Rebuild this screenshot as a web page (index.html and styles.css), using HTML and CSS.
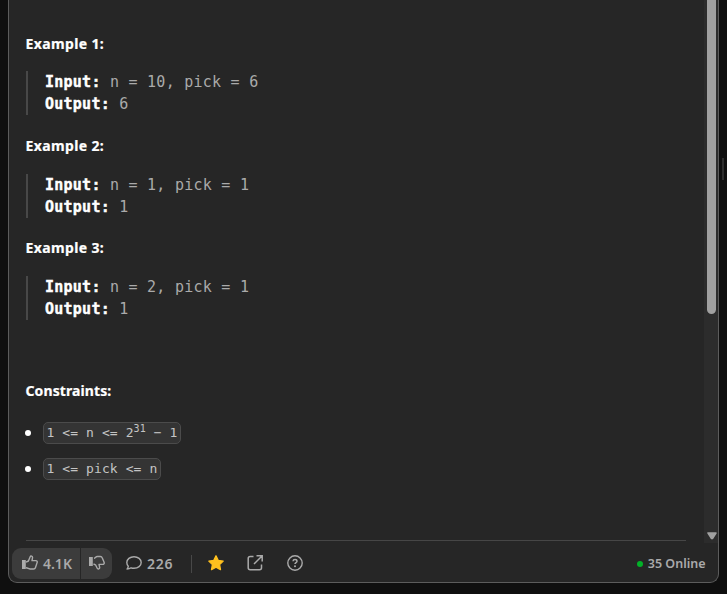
FILE: index.html
```html
<!DOCTYPE html>
<html lang="en">
<head>
<meta charset="utf-8">
<title>Guess Number Higher or Lower</title>
<link rel="stylesheet" href="styles.css">
</head>
<body>
<div class="panel">
  <div class="scroll-area">
    <main class="description">
      <h2 class="heading"><span>Example 1:</span></h2>
      <pre class="example"><b>Input:</b> n = 10, pick = 6
<b>Output:</b> 6</pre>
      <h2 class="heading"><span>Example 2:</span></h2>
      <pre class="example"><b>Input:</b> n = 1, pick = 1
<b>Output:</b> 1</pre>
      <h2 class="heading"><span>Example 3:</span></h2>
      <pre class="example"><b>Input:</b> n = 2, pick = 1
<b>Output:</b> 1</pre>
      <h2 class="heading constraints-title"><span>Constraints:</span></h2>
      <ul class="constraints">
        <li><code>1 &lt;= n &lt;= 2<sup>31</sup> − 1</code></li>
        <li><code>1 &lt;= pick &lt;= n</code></li>
      </ul>
      <div class="rule"></div>
    </main>
    <div class="scrollbar">
      <div class="thumb"></div>
      <svg class="arrow" width="10" height="8" viewBox="0 0 10 8"><path d="M1 1h8L5.500 6.500h-1z" fill="#a0a0a0" stroke="#a0a0a0" stroke-width="1.500" stroke-linejoin="round"/></svg>
    </div>
  </div>
  <footer class="footer">
    <div class="votes">
      <button class="vote up">
        <svg width="16" height="16" viewBox="0 0 16 16"><path d="M0 5h3.800v9H0z" fill="currentColor"/><path d="M4 7.200 6.400 6 8.200 1.700c.5-1.100 2.600-.6 2.300 1.200L10 5.600h3.700c1.200 0 1.800.9 1.400 2l-1.700 5.200c-.3.900-.8 1.200-1.700 1.200H8.200c-1.700 0-2.200-1.200-4.200-1.200" fill="none" stroke="currentColor" stroke-width="1.400" stroke-linejoin="round"/></svg>
        <span>4.1K</span>
      </button>
      <button class="vote down">
        <svg width="16" height="16" viewBox="0 0 16 16"><path d="M0 2h3.800v9H0z" fill="currentColor"/><path d="M5 3.200C6.500 3 6.500 1.500 8.400 1.500h3c.9 0 1.500.5 1.800 1.300l1.900 4.500c.4 1.200-.3 2.100-1.500 2.100H10l.6 2.700c.4 1.800-1.700 2.600-2.400 1.200L6.500 9.800 4.500 9" fill="none" stroke="currentColor" stroke-width="1.400" stroke-linejoin="round"/></svg>
      </button>
    </div>
    <div class="comments">
      <svg width="16" height="16" viewBox="0 0 16 16"><path d="M8 1.700c4 0 7.200 2.500 7.200 5.800S12 13.300 8 13.300c-1 0-2-.2-2.900-.5-1.200.9-2.500 1.300-4.100 1.300.8-.9 1.200-1.900 1.300-2.900C1.300 10.200.8 8.900.8 7.500.8 4.200 4 1.700 8 1.700z" fill="none" stroke="currentColor" stroke-width="1.400" stroke-linejoin="round"/></svg>
      <span>226</span>
    </div>
    <div class="divider"></div>
    <svg class="star" width="18" height="18" viewBox="0 0 18 18"><path d="m9 1.800 2.200 4.600 5 .7-3.600 3.500.9 5L9 13.200l-4.500 2.400.9-5L1.800 7.100l5-.7z" fill="#ffc01e" stroke="#ffc01e" stroke-width="1.300" stroke-linejoin="round"/></svg>
    <svg class="share" width="18" height="18" viewBox="0 0 18 18"><path d="M7.500 2.500H4.200c-1.200 0-2 .8-2 2v9.300c0 1.200.8 2 2 2h9.300c1.200 0 2-.8 2-2V10.500M10.500 1.800h5.700v5.700M16 2l-8 8" fill="none" stroke="currentColor" stroke-width="1.500"/></svg>
    <svg class="help" width="18" height="18" viewBox="0 0 18 18"><circle cx="9" cy="9" r="7.200" fill="none" stroke="currentColor" stroke-width="1.400"/><path d="M7 7.300c.1-1.100.9-1.800 2-1.800s2 .7 2 1.700c0 1.500-2 1.400-2 2.900" fill="none" stroke="currentColor" stroke-width="1.500"/><circle cx="9" cy="12.200" r="1" fill="currentColor"/></svg>
    <div class="online"><i class="dot"></i><span>35 Online</span></div>
  </footer>
</div>
<div class="resizer"></div>
</body>
</html>
```
FILE: styles.css
```css
* { box-sizing: border-box; }

body {
  margin: 0;
  height: 594px;
  padding-left: 8px;
  display: flex;
  overflow: hidden;
  background: #0f0f0f;
  color: #fff;
  font-family: "Noto Sans", sans-serif;
}

.panel {
  width: 711px;
  height: 583px;
  display: flex;
  flex-direction: column;
  border: 1px solid #5c5c5c;
  border-top: 0;
  border-radius: 0 0 9px 9px;
  background: #262626;
  overflow: hidden;
}

.scroll-area { display: flex; height: 543px; }

.description { flex: 1; padding: 32px 18px 0 17px; }

.heading {
  margin: 0 0 0 -0.5px;
  height: 24px;
  font-size: 14px;
  line-height: 24px;
  font-weight: 700;
  letter-spacing: 0.37px;
  -webkit-text-stroke: 0.2px #fff;
}

.example {
  margin: 15.45px 0 18.75px;
  height: 44px;
  padding-left: 17px;
  border-left: 2px solid #484848;
  color: #aaa;
  font: 15px/22px "DejaVu Sans Mono", monospace;
  letter-spacing: 0.25px;
}

.example b { color: #fff; -webkit-text-stroke: 0.4px #fff; }

.constraints-title { margin-top: 59.4px; letter-spacing: 0.1px; }

.constraints { list-style: none; margin: 18px 0 0; padding: 0; }

.constraints li {
  display: flex;
  align-items: center;
  height: 24px;
  margin-bottom: 12px;
}

.constraints li::before {
  content: "";
  width: 6px;
  height: 6px;
  margin: -1px 12px 0 -1px;
  border-radius: 50%;
  background: #fff;
}

code {
  display: block;
  height: 22px;
  padding: 0 2.5px 0 2.5px;
  border: 1px solid #4b4b4b;
  border-radius: 5px;
  background: #343434;
  color: #c4c4c4;
  font: 13px/20px "DejaVu Sans Mono", monospace;
  letter-spacing: 0.09px;
  white-space: pre;
}

sup { font-size: 10px; line-height: 0; vertical-align: 5px; }

.rule { height: 1px; margin-top: 59px; background: #464646; }

.scrollbar {
  width: 14px;
  display: flex;
  flex-direction: column;
  justify-content: space-between;
  background: #2c2c2c;
}

.thumb { width: 9px; height: 314px; margin-left: 3px; border-radius: 0 0 5px 5px; background: #a0a0a0; }
.arrow { display: block; margin: 0 0 3px 2.5px; }

.footer {
  height: 39px;
  padding: 5px 12.5px 3px 3px;
  display: flex;
  align-items: center;
  color: #aaa;
  font-size: 14px;
  font-weight: 600;
}

.footer svg { display: block; flex: none; }
.votes { display: flex; gap: 1px; height: 31px; }

.vote {
  display: flex;
  align-items: center;
  border: 0;
  background: #3c3c3c;
  color: inherit;
  font: inherit;
}

.vote svg, .comments svg { margin-top: -1px; }

.up { width: 68px; gap: 5px; padding: 0 0 0 10px; border-radius: 9px 0 0 9px; }
.down { width: 31px; padding: 0 0 0 8px; border-radius: 0 9px 9px 0; }
.comments { display: flex; align-items: center; gap: 5px; width: 65px; margin-left: 14px; letter-spacing: 0.7px; }
.divider { width: 1px; height: 18px; background: #484848; }
.star { margin: -1px 0 0 15px; }
.share { margin: -1px 0 0 21px; }
.help { margin: -1px 0 0 22px; }
.online { display: flex; align-items: center; gap: 5px; margin-left: auto; font-size: 12.5px; }
.dot { width: 6px; height: 6px; border-radius: 50%; background: #02b128; }
.resizer { width: 2px; height: 22px; margin: 158px 0 0 3px; background: #2e2e2e; }
```
